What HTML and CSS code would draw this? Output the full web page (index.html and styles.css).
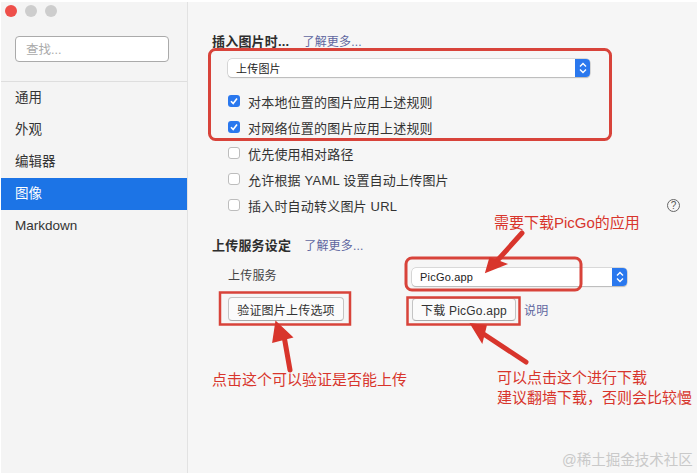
FILE: index.html
```html
<!DOCTYPE html>
<html lang="zh-CN">
<head>
    <meta charset="UTF-8">
    <title>图像偏好设置</title>
    <link rel="stylesheet" href="styles.css">
</head>

<body>

<div class="window">
    <!-- Sidebar -->
    <aside class="sidebar">
        <div class="traffic">
            <span class="light red"></span>
            <span class="light"></span>
            <span class="light"></span>
        </div>
        <div class="search-box">
            <div class="search">查找...</div>
        </div>
        <ul class="nav">
            <li>通用</li>
            <li>外观</li>
            <li>编辑器</li>
            <li class="active">图像</li>
            <li>Markdown</li>
        </ul>
    </aside>

    <main class="content">
        <!-- Section: insert image -->
        <div class="heading">
            <strong>插入图片时...</strong>
            <a class="link">了解更多...</a>
        </div>
        <div class="options">
            <div class="select wide">
                <span>上传图片</span>
                <span class="stepper">
                    <svg width="8" height="12" viewBox="0 0 8 12"><path d="M1 4.5 4 1.5 7 4.5M1 7.5 4 10.5 7 7.5" fill="none" stroke="#fff" stroke-width="1.4"/></svg>
                </span>
            </div>
            <label class="check"><span class="box on"><svg width="12" height="12" viewBox="0 0 12 12"><path d="M3 6.2 5.2 8.6 9 3.6" fill="none" stroke="#fff" stroke-width="1.6"/></svg></span>对本地位置的图片应用上述规则</label>
            <label class="check"><span class="box on"><svg width="12" height="12" viewBox="0 0 12 12"><path d="M3 6.2 5.2 8.6 9 3.6" fill="none" stroke="#fff" stroke-width="1.6"/></svg></span>对网络位置的图片应用上述规则</label>
            <label class="check"><span class="box"></span>优先使用相对路径</label>
            <label class="check"><span class="box"></span>允许根据 YAML 设置自动上传图片</label>
            <div class="check-row">
                <label class="check"><span class="box"></span>插入时自动转义图片 URL</label>
                <span class="help">?</span>
            </div>
        </div>

        <!-- Section: upload service -->
        <div class="heading second">
            <strong>上传服务设定</strong>
            <a class="link">了解更多...</a>
        </div>
        <div class="service">
            <span class="service-label">上传服务</span>
            <div class="select narrow">
                <span>PicGo.app</span>
                <span class="stepper">
                    <svg width="8" height="12" viewBox="0 0 8 12"><path d="M1 4.5 4 1.5 7 4.5M1 7.5 4 10.5 7 7.5" fill="none" stroke="#fff" stroke-width="1.4"/></svg>
                </span>
            </div>
            <div><button class="btn validate">验证图片上传选项</button></div>
            <div class="btn-row">
                <button class="btn download">下载 PicGo.app</button>
                <a class="link">说明</a>
            </div>
        </div>
    </main>
</div>

<!-- Red annotations drawn over the screenshot -->
<div class="notes">
    <svg class="marks" width="697" height="473" viewBox="0 0 697 473">
        <g fill="none" stroke="#d8433a">
            <rect x="209.5" y="49.5" width="401" height="90" rx="6" stroke-width="3"/>
            <rect x="406" y="258" width="175" height="32" rx="6" stroke-width="3"/>
            <rect x="407.5" y="297.5" width="112" height="27" stroke-width="2.5"/>
            <rect x="220" y="292.5" width="130" height="32" stroke-width="2.5"/>
        </g>
        <g fill="#d8352c" stroke="#d8352c" stroke-linecap="round">
            <path d="M284 336 290 370" stroke-width="5"/>
            <path d="M276 322 273 342 292 337Z" stroke-width="1.5"/>
            <path d="M522 233 496 262" stroke-width="5"/>
            <path d="M486 272 490 258 506 264Z" stroke-width="1.5"/>
            <path d="M526 362 479 331" stroke-width="5"/>
            <path d="M471 324 482 342 486 326Z" stroke-width="1.5"/>
        </g>
    </svg>
    <span class="note need">需要下载PicGo的应用</span>
    <span class="note verify">点击这个可以验证是否能上传</span>
    <span class="note click">可以点击这个进行下载<br>建议翻墙下载，否则会比较慢</span>
    <span class="watermark">@稀土掘金技术社区</span>
</div>

</body>
</html>
```

FILE: styles.css
```css
* {
    box-sizing: border-box;
}

body {
    position: relative;
    width: 697px;
    height: 473px;
    margin: 0;
    overflow: hidden;
    background-color: white;
    font-family: "Liberation Sans", "Noto Sans CJK SC", sans-serif;
    font-size: 13px;
    color: #333;
}

.window {
    display: flex;
    height: 471px;
    margin: 2px 0 0 1px;
    background-color: #f6f6f6;
}

/* Sidebar */
.sidebar {
    width: 187px;
    flex-shrink: 0;
    background-color: #f4f4f4;
    border-right: 1px solid #e2e2e2;
}

.traffic {
    display: flex;
    gap: 8px;
    padding: 3px 0 0 4px;
}

.light {
    width: 12px;
    height: 12px;
    border-radius: 50%;
    background-color: #cdcdcd;
}

.light.red {
    background-color: #ee4f4a;
}

.search-box {
    height: 65px;
    padding: 19px 18px 0 14px;
    border-bottom: 1px solid #dedede;
}

.search {
    height: 26px;
    padding: 2px 10px;
    background-color: white;
    border: 1px solid #aaa;
    border-radius: 4px;
    font-size: 12.5px;
    color: #aaa;
}

.nav {
    margin: 0;
    padding: 0;
    list-style: none;
}

.nav li {
    height: 32px;
    padding-left: 14px;
    line-height: 32px;
    font-size: 13.5px;
}

.nav li.active {
    background-color: #1c74e6;
    color: white;
}

/* Main content */
.content {
    flex: 1;
    padding: 30px 0 0 24px;
    letter-spacing: 0.2px;
}

.heading {
    display: flex;
    gap: 13px;
    height: 20px;
    line-height: 20px;
}

.heading strong {
    color: #2e2e2e;
}

.heading.second {
    margin-top: 18px;
}

.link {
    font-size: 12px;
    color: #5f67a0;
}

.options {
    padding: 7px 0 0 16px;
}

.select {
    display: flex;
    justify-content: space-between;
    align-items: center;
    height: 18px;
    padding-left: 8px;
    background-color: white;
    border-radius: 4px;
    box-shadow: 0 0 0 0.5px #bbb, 0 1px 1px #bbb;
    font-size: 11px;
    color: #222;
}

.select.wide {
    width: 362px;
    margin-bottom: 11px;
}

.select.narrow {
    width: 215px;
}

.stepper {
    display: flex;
    justify-content: center;
    align-items: center;
    width: 15px;
    height: 18px;
    background-color: #2a78ee;
    border-radius: 0 4px 4px 0;
}

.check {
    display: flex;
    align-items: center;
    gap: 8px;
    height: 26px;
}

.check-row {
    display: flex;
    justify-content: space-between;
    align-items: center;
    width: 452px;
}

.box {
    width: 12px;
    height: 12px;
    background-color: white;
    border: 1px solid #bdbdbd;
    border-radius: 3px;
}

.box.on {
    background-color: #2a78ee;
    border: none;
}

.box svg {
    display: block;
}

.help {
    width: 13px;
    height: 13px;
    border: 1px solid #666;
    border-radius: 50%;
    text-align: center;
    line-height: 11px;
    font-size: 10px;
    letter-spacing: 0;
    color: #555;
}

.service {
    display: grid;
    grid-template-columns: 184px 1fr;
    row-gap: 11px;
    align-items: center;
    margin-top: 12px;
    padding-left: 16px;
}

.service-label {
    margin-top: -5px;
    font-size: 12px;
    color: #444;
}

.btn {
    height: 24px;
    padding: 0;
    background-color: #fbfbfb;
    border: 1px solid #c4c4c4;
    border-bottom-color: #aaa;
    border-radius: 4px;
    font-family: inherit;
    font-size: 12px;
    letter-spacing: 0.2px;
    color: #333;
}

.btn.validate {
    display: block;
    width: 116px;
}

.btn.download {
    width: 104px;
    height: 23px;
}

.btn-row {
    display: flex;
    align-items: center;
    gap: 8px;
}

/* Annotations */
.notes {
    position: absolute;
    left: 0;
    top: 0;
    width: 697px;
    height: 473px;
}

.marks {
    position: absolute;
    left: 0;
    top: 0;
}

.note {
    position: absolute;
    font-size: 15px;
    line-height: 20px;
    color: #d8352c;
    white-space: nowrap;
}

.need {
    left: 494px;
    top: 213px;
}

.verify {
    left: 212px;
    top: 370px;
}

.click {
    left: 497px;
    top: 368px;
}

.watermark {
    position: absolute;
    left: 562px;
    top: 450px;
    font-size: 14.5px;
    line-height: 20px;
    color: #c9c9c9;
    white-space: nowrap;
}
```
